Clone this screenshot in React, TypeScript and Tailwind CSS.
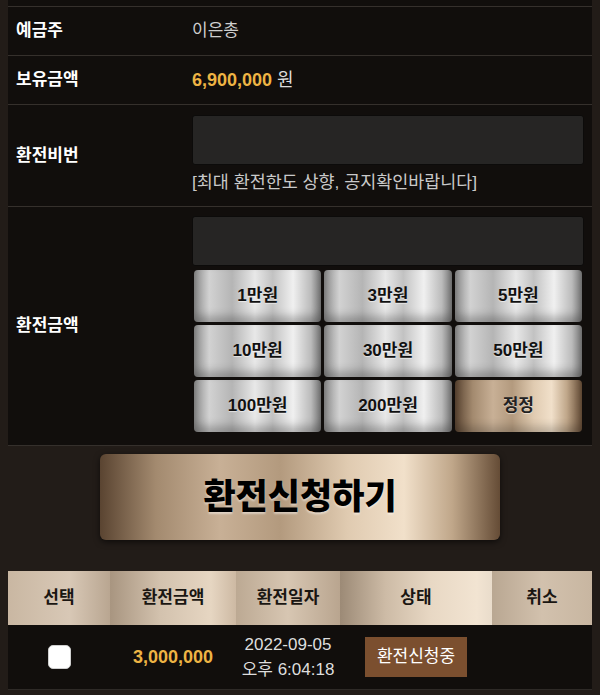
import React from 'react';

const silver =
  'bg-[linear-gradient(90deg,#8c8c8c_0%,#d2d2d2_12%,#b5b5b5_30%,#e8e8e8_48%,#c2c2c2_62%,#f0f0f0_78%,#bbbbbb_92%,#7a7a7a_100%)]';
const gold =
  'bg-[linear-gradient(90deg,#5a4431_0%,#a38a6f_14%,#c8b096_30%,#b39a7e_45%,#e0cbb1_62%,#f1e0ca_76%,#c0a78a_88%,#654c36_100%)]';

const amounts = ['1만원', '3만원', '5만원', '10만원', '30만원', '50만원', '100만원', '200만원'];

const headers = [
  { label: '선택', w: 'w-[102px]', bg: 'bg-[linear-gradient(90deg,#c9b7a2,#d8c8b6_60%,#b9a691)]' },
  { label: '환전금액', w: 'w-[126px]', bg: 'bg-[linear-gradient(90deg,#a89580,#d3c2ae_40%,#e6d6c2_80%,#cdb9a3)]' },
  { label: '환전일자', w: 'w-[104px]', bg: 'bg-[linear-gradient(90deg,#bca993,#d7c6b2_50%,#b9a58f)]' },
  { label: '상태', w: 'w-[152px]', bg: 'bg-[linear-gradient(90deg,#9c8a76,#cdbba6_30%,#e8d8c4_60%,#f2e4d2_90%,#e9dccb)]' },
  { label: '취소', w: 'flex-1', bg: 'bg-[linear-gradient(90deg,#b9a792,#d2c1ad_50%,#c8b6a1)]' },
];

const App: React.FC = () => {
  return (
    <div className="w-[600px] min-h-[695px] bg-[#221c18] px-2 font-['Liberation_Sans','Noto_Sans_CJK_KR',sans-serif]">
      <div className="bg-[#110e0c]">
        <div className="h-[7px] border-b border-[#35302c]" />

        <div className="flex h-[49px] items-center border-b border-[#35302c]">
          <div className="w-[184px] pl-2 text-[17px] font-bold text-white">예금주</div>
          <div className="text-[17px] text-[#cfcfcf]">이은총</div>
        </div>

        <div className="flex h-[49px] items-center border-b border-[#35302c]">
          <div className="w-[184px] pl-2 text-[17px] font-bold text-white">보유금액</div>
          <div className="text-[18px] text-[#dcdcdc]">
            <span className="font-bold text-[#eeb444]">6,900,000</span> 원
          </div>
        </div>

        <div className="flex h-[102px] items-center border-b border-[#35302c]">
          <div className="w-[184px] pl-2 text-[17px] font-bold text-white">환전비번</div>
          <div className="flex-1 self-start pr-2 pt-[10px]">
            <div className="h-[50px] rounded-[3px] border border-[#0c0b0a] bg-[#262524]" />
            <div className="mt-[4px] text-[17.4px] leading-[26px] text-[#c9c9c9]">[최대 환전한도 상향, 공지확인바랍니다]</div>
          </div>
        </div>

        <div className="flex h-[239px] items-center border-b border-[#35302c]">
          <div className="w-[184px] pl-2 text-[17px] font-bold text-white">환전금액</div>
          <div className="flex-1 self-start pr-2 pt-[9px]">
            <div className="h-[50px] rounded-[3px] border border-[#0c0b0a] bg-[#262524]" />
            <div className="mt-[4px] grid grid-cols-3 gap-[3px] px-[2px]">
              {amounts.map((a) => (
                <button
                  key={a}
                  className={`h-[52px] rounded-[4px] ${silver} text-[17px] font-bold text-[#111] shadow-[inset_0_-6px_8px_rgba(0,0,0,0.25)] [text-shadow:0_1px_1px_rgba(255,255,255,0.6)]`}
                >
                  {a}
                </button>
              ))}
              <button
                className={`h-[52px] rounded-[4px] ${gold} text-[17px] font-bold text-[#222] shadow-[inset_0_-6px_8px_rgba(0,0,0,0.2)] [text-shadow:0_1px_1px_rgba(255,255,255,0.5)]`}
              >
                정정
              </button>
            </div>
          </div>
        </div>
      </div>

      <div className="flex justify-center pt-[8px] pb-[31px]">
        <button
          className={`h-[86px] w-[400px] rounded-[6px] ${gold} text-[35px] font-black text-black shadow-[0_2px_6px_rgba(0,0,0,0.6)] [text-shadow:0_2px_2px_rgba(255,255,255,0.45)]`}
        >
          환전신청하기
        </button>
      </div>

      <div className="bg-[#110e0c]">
        <div className="flex h-[54px]">
          {headers.map((h) => (
            <div
              key={h.label}
              className={`${h.w} ${h.bg} flex items-center justify-center text-[17px] font-bold text-[#1a1612]`}
            >
              {h.label}
            </div>
          ))}
        </div>
        <div className="flex h-[65px] items-center border-b border-[#2e2a27] text-[17px]">
          <div className="flex w-[102px] justify-center">
            <div className="h-[24px] w-[23px] rounded-[5px] border border-[#cfcfcf] bg-white" />
          </div>
          <div className="w-[126px] text-center text-[18px] font-bold text-[#eeb444]">3,000,000</div>
          <div className="w-[104px] text-center text-[17px] leading-[25px] text-[#dedede]">
            <div>2022-09-05</div>
            <div>오후 6:04:18</div>
          </div>
          <div className="flex w-[152px] justify-center">
            <span className="bg-[#7b4f2f] px-[12px] py-[7px] text-[17px] text-white">환전신청중</span>
          </div>
          <div className="flex-1" />
        </div>
      </div>
    </div>
  );
};

export default App;
